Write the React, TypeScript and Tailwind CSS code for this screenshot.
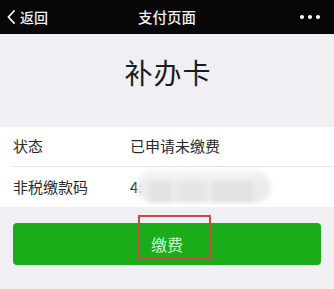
import React from "react";

export default function App() {
  const font = { fontFamily: '"Noto Sans CJK SC", "Noto Sans", sans-serif' };
  return (
    <div className="w-[334px] h-[289px] bg-[#efeff4] overflow-hidden" style={font}>
      {/* header */}
      <div className="h-[34px] bg-[#070707] flex items-center justify-between px-[7px] text-white">
        <div className="flex items-center gap-[5px] w-[80px]">
          <svg width="8" height="14" viewBox="0 0 8 14" fill="none">
            <path d="M7 1 L1.5 7 L7 13" stroke="#f2f2f2" strokeWidth="1.8" strokeLinecap="square" />
          </svg>
          <span className="text-[14px] leading-none text-[#f2f2f2] font-medium">返回</span>
        </div>
        <span className="text-[14.5px] leading-none text-[#f0f0f0] font-medium">支付页面</span>
        <div className="w-[80px] flex justify-end gap-[4px] pr-[7px]">
          <span className="w-[4px] h-[4px] rounded-full bg-white" />
          <span className="w-[4px] h-[4px] rounded-full bg-white" />
          <span className="w-[4px] h-[4px] rounded-full bg-white" />
        </div>
      </div>

      {/* title */}
      <div className="h-[93px] flex items-center justify-center pb-[18px]">
        <span className="text-[28px] leading-none text-[#1c1c1c] font-normal tracking-[1px] ml-[2px]">补办卡</span>
      </div>

      {/* card */}
      <div className="bg-white">
        <div className="h-[39px] flex items-center pl-[13px] text-[15px] text-[#2a2a2a]">
          <span className="w-[117px]">状态</span>
          <span>已申请未缴费</span>
        </div>
        <div className="ml-[12px] h-px bg-[#e6e6e6]" />
        <div className="h-[40px] flex items-center pl-[13px] text-[15px] text-[#2a2a2a]">
          <span className="w-[117px]">非税缴款码</span>
          <span>4:</span>
          <div className="ml-[-6px] w-[134px] h-[32px] rounded-full bg-[#ececec] blur-[2px] flex flex-col overflow-hidden">
            <div className="h-[10px] bg-[#f1f1f1]" />
            <div className="flex-1 flex gap-[6px] px-[12px]">
              <div className="w-[22px] bg-[#e3e3e3]" />
              <div className="w-[30px] bg-[#e6e6e6]" />
              <div className="w-[40px] bg-[#e2e2e2]" />
            </div>
          </div>
        </div>
      </div>

      {/* button */}
      <div className="px-[13px] pt-[16px]">
        <div className="relative h-[42px] rounded-[4px] bg-[#1aad19] flex items-center justify-center">
          <span className="text-[16px] leading-none text-[#d8f5d0]">缴费</span>
          <div className="absolute left-[125px] top-[-8px] w-[73px] h-[44px] border-[2px] border-[#c94a44]" />
        </div>
      </div>
    </div>
  );
}
